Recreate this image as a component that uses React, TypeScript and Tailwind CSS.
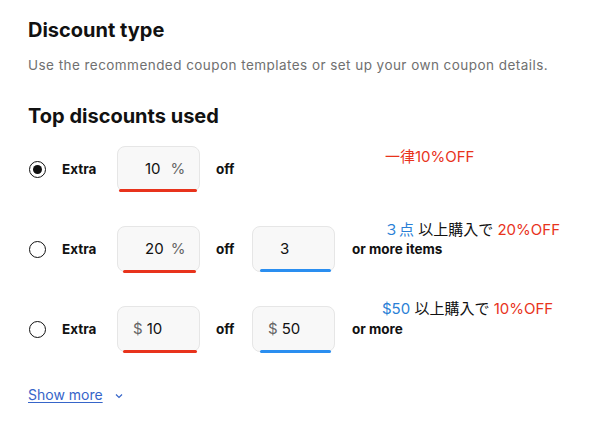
import React from "react";

const RED = "bg-[#e8331c]";

function Box({ children, underline, ulClass }: { children: React.ReactNode; underline: string; ulClass: string }) {
  return (
    <div className="relative h-[46px] w-[83px] rounded-[8px] border border-[#e6e6e6] bg-[#f8f8f8] flex items-center">
      {children}
      <div className={`absolute h-[3px] rounded-full ${underline} ${ulClass}`} />
    </div>
  );
}

function Radio({ checked }: { checked?: boolean }) {
  return (
    <div className="w-[34px] flex items-center">
      <div className="ml-[1px] h-[17px] w-[17px] rounded-full border-[1.5px] border-[#111] flex items-center justify-center">
        {checked && <div className="h-[9px] w-[9px] rounded-full bg-[#111]" />}
      </div>
    </div>
  );
}

export default function App() {
  return (
    <div className="relative w-[597px] h-[433px] bg-white text-[#111] pl-[28px] pt-[18px]" style={{ fontFamily: "Inter, 'Noto Sans CJK JP', sans-serif" }}>
      <h1 className="text-[20px] font-bold leading-[24px]">Discount type</h1>
      <p className="mt-[14px] text-[13.5px] leading-[18px] text-[#707070] tracking-[0.45px]">
        Use the recommended coupon templates or set up your own coupon details.
      </p>
      <h2 className="mt-[30px] text-[20px] font-bold leading-[24px]">Top discounts used</h2>

      <div className="mt-[18px] flex flex-col gap-[34px]">
        {/* Row 1 */}
        <div className="flex items-center h-[46px]">
          <Radio checked />
          <div className="w-[55px] text-[13.5px] font-bold">Extra</div>
          <Box underline={RED} ulClass="left-[1px] right-[2px] bottom-[-1px]">
            <span className="ml-[27px] text-[15px]">10</span>
            <span className="ml-[10px] text-[15px] text-[#666]">%</span>
          </Box>
          <div className="ml-[16px] text-[13.5px] font-bold">off</div>
        </div>

        {/* Row 2 */}
        <div className="flex items-center h-[46px]">
          <Radio />
          <div className="w-[55px] text-[13.5px] font-bold">Extra</div>
          <Box underline={RED} ulClass="left-[5px] right-[3px] bottom-[-2px]">
            <span className="ml-[27px] text-[15px]">20</span>
            <span className="ml-[7px] text-[15px] text-[#666]">%</span>
          </Box>
          <div className="w-[52px] pl-[16px] text-[13.5px] font-bold">off</div>
          <Box underline="bg-[#2a8ef0]" ulClass="left-[7px] right-[3px] bottom-[-1px]">
            <span className="ml-[27px] text-[15px]">3</span>
          </Box>
          <div className="ml-[17px] text-[13.5px] font-bold">or more items</div>
        </div>

        {/* Row 3 */}
        <div className="flex items-center h-[46px]">
          <Radio />
          <div className="w-[55px] text-[13.5px] font-bold">Extra</div>
          <Box underline={RED} ulClass="left-[5px] right-[2px] bottom-[-2px]">
            <span className="ml-[15px] text-[15px] text-[#666]">$</span>
            <span className="ml-[4px] text-[15px]">10</span>
          </Box>
          <div className="w-[52px] pl-[16px] text-[13.5px] font-bold">off</div>
          <Box underline="bg-[#2a8ef0]" ulClass="left-[7px] right-[3px] bottom-[-2px]">
            <span className="ml-[15px] text-[15px] text-[#666]">$</span>
            <span className="ml-[4px] text-[15px]">50</span>
          </Box>
          <div className="ml-[17px] text-[13.5px] font-bold">or more</div>
        </div>
      </div>

      <div className="mt-[32px] flex items-center">
        <span className="text-[14px] text-[#3665c9] underline underline-offset-2">Show more</span>
        <svg className="ml-[12px] mt-[2px]" width="8" height="6" viewBox="0 0 8 6" fill="none">
          <path d="M1 1.5 L4 4.5 L7 1.5" stroke="#3665c9" strokeWidth="1.2" />
        </svg>
      </div>

      {/* annotations */}
      <div className="absolute left-[385px] top-[147px] text-[15px] leading-[20px] text-[#e8331c]">一律10%OFF</div>
      <div className="absolute left-[384px] top-[220px] text-[15px] leading-[20px] text-[#111]">
        <span className="text-[#2a7fd6]">３点</span> 以上購入で <span className="text-[#e8331c]">20%OFF</span>
      </div>
      <div className="absolute left-[382px] top-[299px] text-[15px] leading-[20px] text-[#111]">
        <span className="text-[#2a7fd6]">$50</span> 以上購入で <span className="text-[#e8331c]">10%OFF</span>
      </div>
    </div>
  );
}
